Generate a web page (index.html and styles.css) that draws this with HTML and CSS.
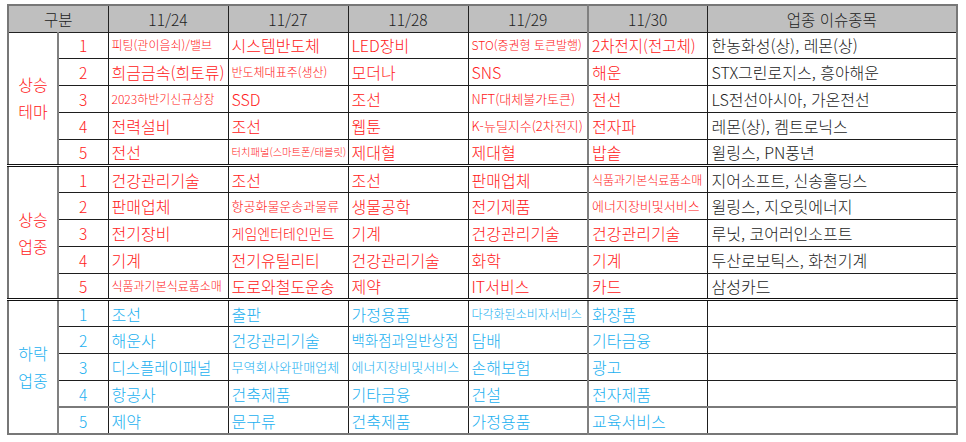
FILE: index.html
```html
<!DOCTYPE html>
<html lang="ko">
<head>
<meta charset="utf-8">
<title>테마 업종 표</title>
<link rel="stylesheet" href="styles.css">
</head>
<body>
<table class="board">
  <colgroup>
    <col class="c-grp">
    <col class="c-num">
    <col class="c-day">
    <col class="c-day">
    <col class="c-day">
    <col class="c-day">
    <col class="c-day c-last">
    <col class="c-stock">
  </colgroup>
  <thead>
    <tr class="head">
      <th colspan="2">구분</th>
      <th>11/24</th>
      <th>11/27</th>
      <th>11/28</th>
      <th>11/29</th>
      <th>11/30</th>
      <th>업종 이슈종목</th>
    </tr>
  </thead>
  <tbody class="sec up">
    <tr>
      <td class="grp" rowspan="5">상승<br>테마</td>
      <td class="num">1</td>
      <td class="s12">피팅(관이음쇠)/밸브</td>
      <td>시스템반도체</td>
      <td>LED장비</td>
      <td class="s12">STO(증권형 토큰발행)</td>
      <td class="s155">2차전지(전고체)</td>
      <td class="stock">한농화성(상), 레몬(상)</td>
    </tr>
    <tr>
      <td class="num">2</td>
      <td>희금금속(희토류)</td>
      <td class="s12">반도체대표주(생산)</td>
      <td>모더나</td>
      <td>SNS</td>
      <td>해운</td>
      <td class="stock">STX그린로지스, 흥아해운</td>
    </tr>
    <tr>
      <td class="num">3</td>
      <td class="s12">2023하반기신규상장</td>
      <td>SSD</td>
      <td>조선</td>
      <td class="s13">NFT(대체불가토큰)</td>
      <td>전선</td>
      <td class="stock">LS전선아시아, 가온전선</td>
    </tr>
    <tr>
      <td class="num">4</td>
      <td>전력설비</td>
      <td>조선</td>
      <td>웹툰</td>
      <td class="s13">K-뉴딜지수(2차전지)</td>
      <td>전자파</td>
      <td class="stock">레몬(상), 켐트로닉스</td>
    </tr>
    <tr>
      <td class="num">5</td>
      <td>전선</td>
      <td class="s103">터치패널(스마트폰/태블릿)</td>
      <td>제대혈</td>
      <td>제대혈</td>
      <td>밥솥</td>
      <td class="stock">윌링스, PN풍년</td>
    </tr>
  </tbody>
  <tbody class="sec up">
    <tr>
      <td class="grp" rowspan="5">상승<br>업종</td>
      <td class="num">1</td>
      <td>건강관리기술</td>
      <td>조선</td>
      <td>조선</td>
      <td>판매업체</td>
      <td class="s12">식품과기본식료품소매</td>
      <td class="stock">지어소프트, 신송홀딩스</td>
    </tr>
    <tr>
      <td class="num">2</td>
      <td>판매업체</td>
      <td class="s13">항공화물운송과물류</td>
      <td>생물공학</td>
      <td>전기제품</td>
      <td class="s13">에너지장비및서비스</td>
      <td class="stock">윌링스, 지오릿에너지</td>
    </tr>
    <tr>
      <td class="num">3</td>
      <td>전기장비</td>
      <td class="s14">게임엔터테인먼트</td>
      <td>기계</td>
      <td>건강관리기술</td>
      <td>건강관리기술</td>
      <td class="stock">루닛, 코어러인소프트</td>
    </tr>
    <tr>
      <td class="num">4</td>
      <td>기계</td>
      <td>전기유틸리티</td>
      <td>건강관리기술</td>
      <td>화학</td>
      <td>기계</td>
      <td class="stock">두산로보틱스, 화천기계</td>
    </tr>
    <tr>
      <td class="num">5</td>
      <td class="s12">식품과기본식료품소매</td>
      <td>도로와철도운송</td>
      <td>제약</td>
      <td>IT서비스</td>
      <td>카드</td>
      <td class="stock">삼성카드</td>
    </tr>
  </tbody>
  <tbody class="sec down">
    <tr>
      <td class="grp" rowspan="5">하락<br>업종</td>
      <td class="num">1</td>
      <td>조선</td>
      <td>출판</td>
      <td>가정용품</td>
      <td class="s12">다각화된소비자서비스</td>
      <td>화장품</td>
      <td class="stock"></td>
    </tr>
    <tr>
      <td class="num">2</td>
      <td>해운사</td>
      <td>건강관리기술</td>
      <td class="s145">백화점과일반상점</td>
      <td>담배</td>
      <td>기타금융</td>
      <td class="stock"></td>
    </tr>
    <tr>
      <td class="num">3</td>
      <td class="s155">디스플레이패널</td>
      <td class="s13">무역회사와판매업체</td>
      <td class="s13">에너지장비및서비스</td>
      <td>손해보험</td>
      <td>광고</td>
      <td class="stock"></td>
    </tr>
    <tr>
      <td class="num">4</td>
      <td>항공사</td>
      <td>건축제품</td>
      <td>기타금융</td>
      <td>건설</td>
      <td>전자제품</td>
      <td class="stock"></td>
    </tr>
    <tr class="gline">
      <td class="num">5</td>
      <td>제약</td>
      <td>문구류</td>
      <td>건축제품</td>
      <td>가정용품</td>
      <td>교육서비스</td>
      <td class="stock"></td>
    </tr>
  </tbody>
</table>
</body>
</html>
```
FILE: styles.css
```css
html, body {
  margin: 0;
  padding: 0;
  background: #ffffff;
}

body {
  padding: 4px 0 0 7px;
  font-family: "Noto Sans CJK KR", "Noto Sans", sans-serif;
  font-weight: 300;
}

.board {
  border-collapse: collapse;
  table-layout: fixed;
  width: 950px;
  border: 2px solid #777777;
}

.c-grp { width: 50px; }
.c-num { width: 50px; }
.c-day { width: 120px; }
.c-last { width: 119px; border-left: 2px solid #808080; }
.c-stock { width: 250px; }

.head { height: 27px; }

.head th {
  background: #bfbfbf;
  color: #222222;
  font-weight: 300;
  font-size: 15.5px;
  line-height: 16px;
  padding: 0;
  text-align: center;
  border: 1px solid #222222;
  border-top-color: #555555;
}

.sec tr { height: 26.8px; }

.board td {
  padding: 0 3px;
  font-size: 16px;
  line-height: 16px;
  white-space: nowrap;
  overflow: hidden;
  border: 1px solid #1e1e1e;
  vertical-align: middle;
  text-align: left;
}

.up td { color: #ff2020; }
.down td { color: #1ab0f0; }

.board td.stock { color: #1c1c1c; padding-left: 4px; }

.board td.num {
  text-align: center;
  font-size: 15.5px;
  padding-left: 0;
  padding-right: 0;
}

.board td.grp {
  text-align: center;
  font-size: 16px;
  line-height: 27px;
  padding: 0;
  border-right: 2px solid #808080;
}

.sec + .sec tr:first-child td {
  border-top: 3px double #111111;
}

.gline td { border-top: 2px solid #7a7a7a; }

.board td.s103 { font-size: 10.3px; }
.board td.s12 { font-size: 12px; }
.board td.s13 { font-size: 13px; }
.board td.s14 { font-size: 14px; }
.board td.s145 { font-size: 14.5px; }
.board td.s155 { font-size: 15.5px; }
```
